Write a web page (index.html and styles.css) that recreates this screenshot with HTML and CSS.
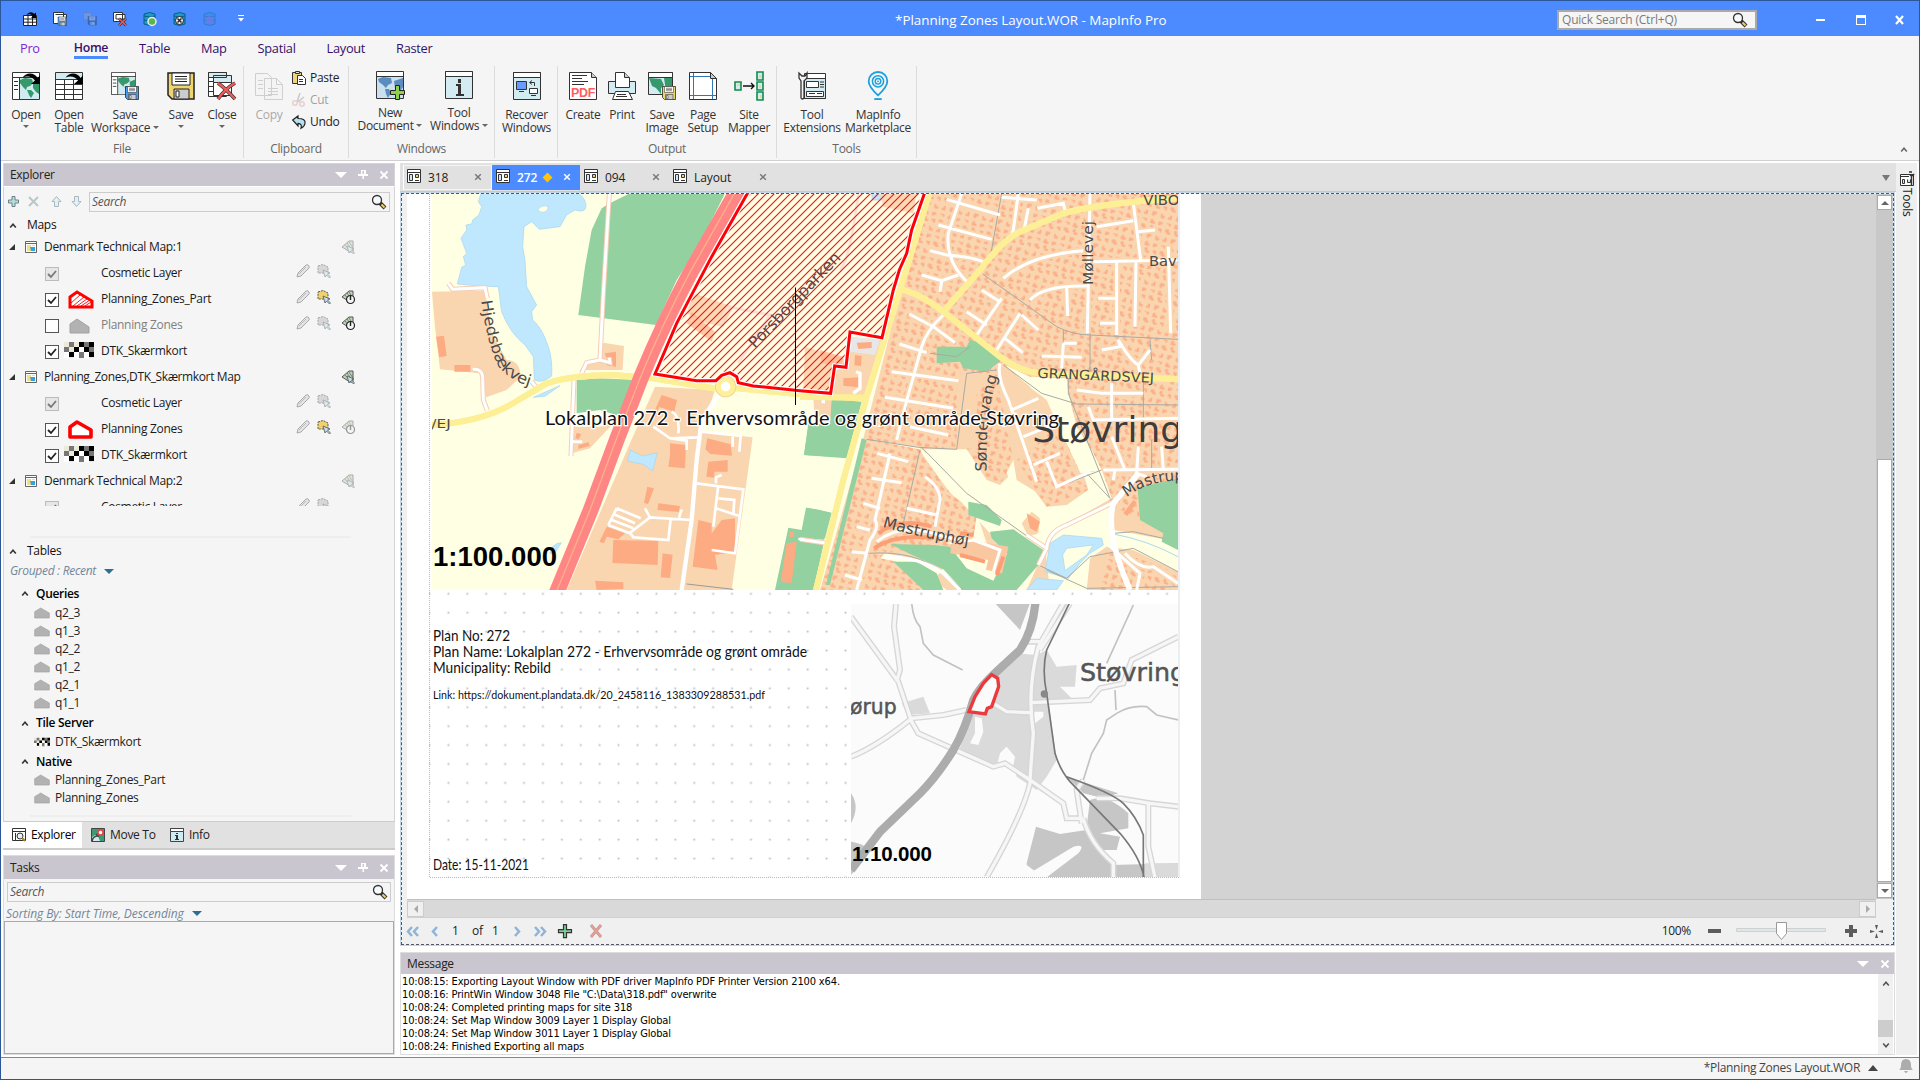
FILE: index.html
```html
<!DOCTYPE html>
<html lang="en">
<head>
<meta charset="utf-8">
<title>*Planning Zones Layout.WOR - MapInfo Pro</title>
<link rel="stylesheet" href="styles.css">
</head>
<body>
<svg class="defs" width="0" height="0">
  <defs>
    <symbol id="i-world" viewBox="0 0 28 28"><path fill="#fff" stroke="#333" d="M.5.5h27v27H.5z"/><path fill="#cfeaf1" d="M8 6h19v21H8z"/><path fill="#35996b" d="M8 8l5-2 7 1 1 4-3 3-3 1-1 3-3-3-3-4zM15 18l4 0 3 3-3 5-2-3zM21 12l6-3v13l-3-2-3-4z"/><path stroke="#333" d="M0 5.500h28M7.500 6v21M2 9.500h4M2 13.500h4M2 17.500h4"/></symbol>
    <symbol id="i-arrow" viewBox="0 0 28 28"><path fill="#000" d="M10.500 5.500C15-.5 23 1 25.500 6L28 3.500V12h-9l4-3.500C20 4 15 3.500 10.500 5.500z"/></symbol>
    <symbol id="i-table" viewBox="0 0 28 28"><path fill="#fff" stroke="#333" d="M.5.5h27v27H.5z"/><path fill="#d2ecf2" d="M1 1h26v6H1z"/><path stroke="#333" fill="none" d="M0 7.500h28M0 12.500h28M0 17.500h28M0 22.500h28M9.500 7v20M18.500 7v20"/></symbol>
    <symbol id="i-disk" viewBox="0 0 28 28"><path fill="currentColor" stroke="#222" stroke-width="1.500" d="M1 1h26v26H5l-4-4z"/><path fill="#fff" stroke="#222" d="M5 1h18v12H5z"/><path stroke="#222" d="M8 4.500h12M8 7h12M8 9.500h12"/><path fill="#ccc" stroke="#222" d="M7 17h15v10H7z"/><path fill="#fff" stroke="#222" d="M9 19h3v6H9z"/></symbol>
    <symbol id="i-mag" viewBox="0 0 16 16"><path d="M9 9l5 5" stroke="#333" stroke-width="4"/><path d="M10.500 10.500l3 3" stroke="#f0cf60" stroke-width="2"/><circle cx="6" cy="6" r="4.500" fill="#f7fafc" stroke="#333" stroke-width="1.300"/></symbol>
    <symbol id="i-x" viewBox="0 0 10 10"><path d="M1.500 1.500l7 7M8.500 1.500l-7 7" stroke="currentColor" stroke-width="1.800"/></symbol>
    <symbol id="i-pin" viewBox="0 0 10 10"><path fill="currentColor" d="M3 0h5v4h2v2H6v3H4.500V6H0V4h3z"/><path fill="#c9c6cf" d="M4.500 1H6v3H4.500z"/></symbol>
    <symbol id="i-up" viewBox="0 0 10 8"><path d="M1.500 6.500L5 2.500l3.500 4" fill="none" stroke="currentColor" stroke-width="2"/></symbol>
    <symbol id="i-map" viewBox="0 0 12 12"><path fill="#fff" stroke="#666" d="M.5.5h11v11H.5z"/><path stroke="#666" d="M0 2.500h12"/><path fill="#f5dd83" d="M2 4h4v6H2zM7 4h3v1H7z"/><path fill="#30a4dc" d="M5 6h5v4H6z"/></symbol>
    <symbol id="i-pen" viewBox="0 0 14 14"><path d="M1 13l1-4 8-8q2-1 3 1t-1 3l-7 7z" fill="#e4e4e4" stroke="#a9a9a9"/><path d="M3 10l7-7" stroke="#bbb"/></symbol>
    <symbol id="i-sel" viewBox="0 0 15 14"><path fill="currentColor" stroke="#555" stroke-dasharray="2 1" d="M2 2l5-1.500L12 3v6H2z"/><path fill="#bfe0ee" stroke="#555" stroke-width=".8" d="M7 6l7 3-2.500 1 3 3-1 1-3-3L9 13z"/></symbol>
    <symbol id="i-tag" viewBox="0 0 14 14"><path fill="#bcd6b6" stroke="#555" d="M12 1v11H9L1 7l7-6z"/><path stroke="#666" stroke-width=".8" d="M4 5l5 6M6 3l5 7M8 2l4 6"/></symbol>
    <symbol id="i-poly" viewBox="0 0 24 18"><path fill="#b2b2b2" stroke="#a2a2a2" d="M1 7l9-5.500L23 9v7.500H1z"/></symbol>
    <symbol id="i-check" viewBox="0 0 30 16"><path fill="#ece9d8" d="M0 0h30v16H0z"/><path fill="#777" d="M5 0h5v5H5zM0 5h5v5H0zM20 0h5v5h-5zM15 10h5v6h-5zM25 5h5v5h-5z"/><path fill="#000" d="M15 0h5v5h-5zM25 0h5v5h-5zM10 5h5v5h-5zM20 5h5v5h-5zM5 10h5v5H5zM25 10h5v5h-5z"/><path fill="#fff" d="M0 10h5v6H0zM10 10h5v6h-5zM20 10h5v6h-5zM15 5h5v5h-5z"/></symbol>
    <symbol id="i-layout" viewBox="0 0 14 14"><path fill="#fff" stroke="#333" d="M.5.5h13v13H.5z"/><path stroke="#333" d="M0 3.500h14"/><path fill="#cfeaf1" stroke="#333" d="M2.500 5.500h3v6h-3z"/><path fill="#f0d570" stroke="#333" d="M8.500 5.500h3v3h-3z"/><path stroke="#333" d="M8 11.500h4"/></symbol>
    <symbol id="i-db" viewBox="0 0 14 14"><path fill="#1d9bc8" stroke="#0b5c86" d="M1 2q6-3 11 0v10q-5 3-11 0z"/><path fill="none" stroke="#0b5c86" d="M1 4q6 2 11 0M1 8q6 2 11 0"/></symbol>
    <pattern id="dots" patternUnits="userSpaceOnUse" x="438.900" y="584.300" width="18.910" height="18.910"><path fill="#b4bec8" d="M8.600 8.600h1.800v1.800H8.600z"/></pattern>
    <pattern id="hatch" patternUnits="userSpaceOnUse" width="24" height="24"><path d="M-4 28L28-4M-4 4L4-4M20 28l8-8" stroke="#f41010" stroke-width="3.400"/></pattern>
    <pattern id="homes" patternUnits="userSpaceOnUse" width="74" height="68" patternTransform="rotate(14)"><path fill="#fcb089" d="M4 4h12v6h5v8H10v-5H4zM32 2h8v9h7v7H35v-6h-4zM57 6h11v12h-5v-5h-6zM8 29h7v13H3v-6h5zM28 28h14v8h-6v6h-8zM53 30h7v5h7v8H55v-7zM4 53h13v8h-6v-4H4zM30 52h7v6h6v7H28v-7zM53 54h13v7h-6v4h-7z"/></pattern>
    <clipPath id="mainclip"><path d="M432 194h746v396H432z"/></clipPath>
    <clipPath id="miniclip"><path d="M851 604h327v273H851z"/></clipPath>
    <clipPath id="resclip"><path d="M388 100H1134V960L1015 985 1020 1080 925 1030 840 940 775 800 740 720 700 690 610 615 590 650 640 900 600 975 560 950 500 870 370 868 450 1000 530 1060 520 1140 620 1170 580 1260 450 1160 250 1180 420 1290H60L200 840 300 400ZM860 650H1134V940H905L860 800ZM650 900L760 810 865 990 740 1040ZM920 1160L1134 1240V1290H900Z"/></clipPath>
    <g id="streets"><path d="M485 100L445 220Q435 300 500 365M440 118L600 165M415 195L575 238M390 272L440 285Q520 290 560 310M365 345L425 362 475 345M425 362L420 395M655 100L640 210 630 240M605 112L710 120M712 145L790 130 795 150M685 145L672 210M870 100L862 520M890 200L1000 182M1000 130L1022 300M1015 215L1065 210M610 355Q690 285 850 272M880 305L1134 300M950 305V525M1008 300L1005 500M1105 260L1112 520M690 420Q730 375 860 378M800 380L803 468M895 415H948M900 490H948M660 460L590 570M665 465L715 510M615 535L668 578M605 415L530 525M500 455L560 495M545 390L600 425M430 465Q380 510 365 560L318 730 290 840M328 462L400 500 465 548M298 552L380 578M275 635L475 662M255 712L460 745M330 800L445 825M270 880L225 1080Q240 1100 210 1140L170 1290M215 955L305 968M232 880L325 905M190 1030L240 1045M170 1100L210 1110M155 1175L200 1180M135 1245L185 1260M375 950Q420 980 420 1020L405 1100M320 1045L410 1065M230 1145Q300 1090 400 1120T520 1140L600 1170 580 1235M600 610Q590 650 625 720L710 965M635 750L715 715M670 830L770 790M700 915L780 880M740 905L770 980 870 935M905 570L960 560 955 540Q990 600 1015 615L1050 570M1015 615L1020 640M790 550L785 625M725 588L845 592M790 550L830 550M935 670V780M830 690L905 700 1030 700M865 740L880 780 1134 775M935 830L975 930M910 930L1134 928M1085 860L1090 930M1015 860L1010 940 1040 950M945 930L940 960M925 1155L1020 1240 1010 1290M975 1180Q1020 1230 1060 1220L1134 1270"/></g>
    <path id="p-hj" d="M244 422Q262 560 298 622 335 665 395 680"/>
    <path id="p-so" d="M560 935Q555 740 600 630"/>
    <path id="p-mh" d="M247 1100Q370 1135 510 1158"/>
    <path id="p-mv" d="M980 1012Q1050 955 1170 962"/>
  </defs>
</svg>

<div class="window">
  <header class="titlebar">
    <div class="quick">
      <svg viewBox="0 0 14 14"><path fill="#fff" stroke="#222" d="M.5 3.500h13v10H.5zM.5 7h13M.5 10.200h13M5 4v9M9.500 4v9"/><path fill="#000" d="M3.500 3C6-1 10 0 11 2l2-1.500V6H8l2-2C8 2 6 2 3.500 3z"/></svg>
      <svg viewBox="0 0 28 28"><path fill="#fff" stroke="#333" stroke-width="2" d="M1 1h20v22H1zM5 5h22v8"/><svg class="blue" x="9" y="9" width="19" height="19"><use href="#i-disk"/></svg></svg>
      <svg class="faded" viewBox="0 0 28 28"><path fill="#aaa" stroke="#777" stroke-width="2" d="M1 1h16v15H1z"/><svg x="9" y="8" width="19" height="19"><use href="#i-disk"/></svg></svg>
      <svg viewBox="0 0 28 28"><path fill="#fff" stroke="#333" stroke-width="2" d="M1 1h18v18H1zM6 5h18v9H6z"/><path d="M12 13l14 14M26 13L12 27" stroke="#333" stroke-width="5"/><path d="M12 13l14 14M26 13L12 27" stroke="#ef5a5a" stroke-width="3"/></svg>
      <svg viewBox="0 0 14 14"><use href="#i-db"/><circle cx="9" cy="9.500" r="4" fill="#59b74c" stroke="#eee" stroke-width="1.500"/></svg>
      <svg viewBox="0 0 14 14"><use href="#i-db"/><circle cx="6.500" cy="8.500" r="4" fill="#eee" stroke="#222"/><path d="M4.500 6.500l4 4M8.500 6.500l-4 4" stroke="#222" stroke-width="1.400"/></svg>
      <svg class="faded" viewBox="0 0 14 14"><use href="#i-db"/><circle cx="6.500" cy="8" r="3.500" fill="#a55db5"/></svg>
      <svg class="more" viewBox="0 0 6 7"><path fill="#fff" d="M0 0h6v1H0zM0 3h6L3 6.500z"/></svg>
    </div>
    <div class="apptitle">*Planning Zones Layout.WOR - MapInfo Pro</div>
    <div class="qsearch"><span>Quick Search (Ctrl+Q)</span><svg width="16" height="16"><use href="#i-mag"/></svg></div>
    <div class="winbtns">
      <svg width="10" height="12"><path fill="#fff" d="M0 5h9v2H0z"/></svg>
      <svg width="10" height="12"><path fill="#fff" d="M0 1h10v10H0z"/><path fill="#4c8bff" d="M1 4h8v6H1z"/></svg>
      <svg width="10" height="12"><path stroke="#fff" stroke-width="2.200" d="M1 2l7 8M8 2l-7 8"/></svg>
    </div>
  </header>

  <section class="ribbon">
    <nav class="rtabs"><span class="pro">Pro</span><span class="on">Home</span><span>Table</span><span>Map</span><span>Spatial</span><span>Layout</span><span>Raster</span></nav>
    <div class="groups">
      <div class="group g-file"><div class="btns">
        <div class="btn" style="width:40px"><svg viewBox="0 0 28 28"><use href="#i-world"/><use href="#i-arrow"/></svg><span>Open</span><i class="dd"></i></div>
        <div class="btn" style="width:46px"><svg viewBox="0 0 28 28"><use href="#i-table"/><use href="#i-arrow"/></svg><span>Open<br>Table</span></div>
        <div class="btn" style="width:66px"><svg viewBox="0 0 28 28"><svg width="25" height="23" preserveAspectRatio="none" viewBox="0 0 28 28"><use href="#i-world"/></svg><svg class="blue" x="14" y="14" width="14" height="14"><use href="#i-disk"/></svg></svg><span>Save<br>Workspace <i class="dd in"></i></span></div>
        <div class="btn" style="width:46px"><svg class="gold" viewBox="0 0 28 28"><use href="#i-disk"/></svg><span>Save</span><i class="dd"></i></div>
        <div class="btn" style="width:36px"><svg viewBox="0 0 28 28"><path fill="#fff" stroke="#333" d="M.5.5h18v24H.5zM.5 9.500h18M.5 14.500h18M.5 19.500h18"/><path fill="#d2ecf2" stroke="#333" d="M.5.5h18v5H.5zM5.500 3.500h18v7h-18z"/><path d="M5.500 10.500h18v13h-18z" fill="#fff" stroke="#333"/><path d="M10 11q8 6 17 16M27 11Q17 17 10 27" stroke="#333" stroke-width="3.500" fill="none"/><path d="M10 11q8 6 17 16M27 11Q17 17 10 27" stroke="#ef5a5a" stroke-width="2.200" fill="none"/></svg><span>Close</span><i class="dd"></i></div>
      </div><div class="gname">File</div></div>
      <div class="group g-clip"><div class="btns">
        <div class="btn off" style="width:42px"><svg viewBox="0 0 28 28"><path fill="#f4f4f4" stroke="#999" d="M.5 1.500h12l4 4v18H.5zM9.500 6.500h12l6 6v15h-18zM21.500 6.500v6h6M3 8.500h5M3 12.500h5M3 16.500h5M13 16.500h10M13 19.500h10M13 22.500h10"/></svg><span>Copy</span></div>
        <div class="small">
          <div><svg viewBox="0 0 14 14"><path fill="#efd57a" stroke="#333" d="M.5 1.500h9v11h-9z"/><path fill="#ddd" stroke="#333" d="M3.500.5h4v2h-4z"/><path fill="#fff" stroke="#333" d="M5.500 4.500h5l3 3v6h-8zM7 8.500h4M7 10.500h4"/></svg>Paste</div>
          <div class="off"><svg viewBox="0 0 14 14"><path d="M5 9L8 0M6 9l6-5" stroke="#888" stroke-width="1.500"/><circle cx="3" cy="10" r="2.200" fill="none" stroke="#d99" stroke-width="1.600"/><circle cx="10" cy="11" r="2.200" fill="none" stroke="#d99" stroke-width="1.600"/></svg>Cut</div>
          <div><svg viewBox="0 0 14 14"><path fill="#b9e0ee" stroke="#222" stroke-width="1.200" d="M.7 5L6 1v2.500q8 0 7 5-.5 3-4 4.800 1.500-4.500-3-5V11z"/></svg>Undo</div>
        </div>
      </div><div class="gname">Clipboard</div></div>
      <div class="group g-win"><div class="btns lift">
        <div class="btn" style="width:68px"><svg viewBox="0 0 28 28"><path fill="#fff" stroke="#333" d="M.5.5h27v27H.5z"/><path fill="#cbe0ee" d="M1 6h26v21H1z"/><path fill="#5a8cc0" d="M2 8l5-2 8 1 1 5-4 2-2 3-3-3-4-3zM9 18h4l2 4-3 5-2-4zM18 10l9-3v9l-4 6-4-5z"/><path stroke="#333" d="M0 5.500h28"/><path fill="#8ed052" stroke="#222" d="M19.500 14.500h4v5h5v4h-5v5h-4v-5h-5v-4h5z"/></svg><span>New<br>Document <i class="dd in"></i></span></div>
        <div class="btn" style="width:70px"><svg viewBox="0 0 28 28"><path fill="#d2ecf2" stroke="#333" d="M.5.5h27v27H.5z"/><path fill="#fff" stroke="#333" d="M.5.5h27v5H.5z"/><path fill="#333" d="M13 8h3v4h-3zM11 13h5v10h3v2h-8v-2h2v-8h-2z"/></svg><span>Tool<br>Windows <i class="dd in"></i></span></div>
      </div><div class="gname">Windows</div></div>
      <div class="group g-rec"><div class="btns">
        <div class="btn" style="width:62px"><svg viewBox="0 0 28 28"><path fill="#d2ecf2" stroke="#333" d="M.5.5h27v27H.5z"/><path fill="#fff" stroke="#333" d="M.5.5h27v5H.5z"/><path fill="#669bff" stroke="#333" d="M3.500 9.500h10v8h-10z"/><path fill="#fff" stroke="#333" d="M16.500 16.500h8v5h-8z"/><path fill="none" stroke="#333" d="M6 19.500h5M18 23.500h5M21.500 14v-3.500H17m2-2l-2.500 2 2.500 2"/></svg><span>Recover<br>Windows</span></div>
      </div></div>
      <div class="group g-out"><div class="btns">
        <div class="btn" style="width:40px"><svg viewBox="0 0 28 28"><path fill="#fff" stroke="#333" d="M.5.500h22l5 5v22H.5z"/><path fill="#ccc" stroke="#333" d="M22.500.5v5h5"/><path stroke="#333" d="M3 3.500h15M3 6.500h10M3 9.500h16M3 12.500h12"/><text x="14" y="25" text-anchor="middle" font-family="Liberation Sans" font-weight="bold" font-size="12.500" textLength="24" lengthAdjust="spacingAndGlyphs" fill="#ff5e5e">PDF</text></svg><span>Create</span></div>
        <div class="btn" style="width:38px"><svg viewBox="0 0 28 28"><path fill="#d2ecf2" stroke="#333" d="M.5 9.500h27v12H.5z"/><path fill="#fff" stroke="#333" d="M7.500.5h9l5 5v10h-14zM7.500 19.500h13l4 8h-20zM9 22.500h9M8 24.500h11"/><path fill="#ccc" stroke="#333" d="M16.500.5v5h5"/></svg><span>Print</span></div>
        <div class="btn" style="width:42px"><svg viewBox="0 0 28 28"><path fill="#d2ecf2" stroke="#333" d="M.5.5h24v22H.5z"/><path fill="#35996b" d="M1 6l12 1 3 6-3 3v6L8 16l-4-2zM16 6h8v10l-6 3z"/><path fill="#fff" stroke="#333" d="M.5.5h24v5H.5z"/><svg class="gold" x="14" y="14" width="14" height="14"><use href="#i-disk"/></svg></svg><span>Save<br>Image</span></div>
        <div class="btn" style="width:40px"><svg viewBox="0 0 28 28"><path fill="#fff" stroke="#333" d="M.5.500h21l6 6v21H.5z"/><path stroke="#2f78b5" d="M4.500 1v26M23.500 6v21M1 4.500h22M1 23.500h26"/><path fill="#ccc" stroke="#333" d="M21.500.5v6h6z"/></svg><span>Page<br>Setup</span></div>
        <div class="btn" style="width:52px"><svg class="wide" viewBox="0 0 30 30"><path fill="#d2ecf2" stroke="#138a50" stroke-width="1.600" d="M1 11h6v8H1zM23 1h6v8h-6zM23 11h6v8h-6zM23 21h6v8h-6z"/><path fill="#eedc75" d="M3 13h3v2H3zM25 4h3v3h-3zM25 14h2v3h-2zM26 24h2v3h-2z"/><path fill="none" stroke="#111" stroke-width="1.400" d="M9 15h11m-3-3l3 3-3 3"/></svg><span>Site<br>Mapper</span></div>
      </div><div class="gname">Output</div></div>
      <div class="group g-tools"><div class="btns">
        <div class="btn" style="width:64px"><svg viewBox="0 0 28 28"><path fill="#fff" stroke="#333" d="M6.500 1.500h21v25h-21z"/><path fill="#d2ecf2" stroke="#333" d="M6.500 6.500h21v20h-21z"/><path fill="#fff" stroke="#333" d="M8.500 9.500h12v6h-12zM8.500 19.500h17v5h-17zM22 10h4M22 12.500h4M22 15h4M11 21.500h6M19 21.500h5"/><path fill="#f4f4f4" stroke="#333" stroke-width="1.300" d="M1 1v5l2 3v17q1 2 3 0V9l3-3V1L7 4H4z"/></svg><span>Tool<br>Extensions</span></div>
        <div class="btn" style="width:68px"><svg viewBox="0 0 28 30"><path fill="none" stroke="#1ba0dc" stroke-width="1.900" d="M14 25Q4 16 4 10a10 10 0 0 1 20 0q0 6-10 15z"/><circle cx="14" cy="10" r="6" fill="none" stroke="#1ba0dc" stroke-width="1.600"/><circle cx="14" cy="10" r="3" fill="none" stroke="#1ba0dc" stroke-width="1.500"/><circle cx="14" cy="10" r="1" fill="#1ba0dc"/><path fill="#1ba0dc" d="M10 28h8v2h-8z"/></svg><span>MapInfo<br>Marketplace</span></div>
      </div><div class="gname">Tools</div></div>
      <svg class="collapse" width="8" height="7"><use href="#i-up"/></svg>
    </div>
  </section>

  <main class="main">
    <aside class="left">
      <section class="explorer">
        <div class="phead"><span>Explorer</span><svg width="12" height="6"><path fill="#fff" d="M0 0h12L6 6z"/></svg><svg width="10" height="10"><use href="#i-pin"/></svg><svg width="10" height="10"><use href="#i-x"/></svg></div>
        <div class="ebody">
          <div class="etools">
            <svg viewBox="0 0 11 11"><path fill="#b9dcd9" stroke="#6c8289" d="M4 .5h3V4h3.500v3H7v3.500H4V7H.5V4H4z"/></svg>
            <svg viewBox="0 0 11 11"><path stroke="#b9c6ca" stroke-width="2" d="M1 1l9 9M10 1l-9 9"/></svg>
            <svg viewBox="0 0 11 11"><path fill="#e2eff3" stroke="#a8b9c0" d="M5.500.5l4.500 5H7.500v5h-4v-5H1z"/></svg>
            <svg viewBox="0 0 11 11"><path fill="#e2eff3" stroke="#a8b9c0" d="M5.500 10.500l4.500-5H7.500v-5h-4v5H1z"/></svg>
            <div class="sbox"><em>Search</em><svg width="16" height="16"><use href="#i-mag"/></svg></div>
          </div>
          <div class="sec"><svg width="8" height="7"><use href="#i-up"/></svg>Maps</div>
          <div class="tree">
            <div class="root"><b class="tri"></b><svg class="mi"><use href="#i-map"/></svg><span>Denmark Technical Map:1</span><svg class="tg dim" viewBox="0 0 14 14"><use href="#i-tag"/><path fill="#bfe0ee" stroke="#555" stroke-width=".8" d="M6 6l7 3-2.500 1 3 3-1 1-3-3L8 13z"/></svg></div>
            <div class="lay"><i class="cb gray"><svg viewBox="0 0 12 12"><path d="M2 6l3 3 5-6"/></svg></i><span class="sw"></span><span>Cosmetic Layer</span><svg class="pn"><use href="#i-pen"/></svg><svg class="sl no"><use href="#i-sel"/></svg></div>
            <div class="lay"><i class="cb"><svg viewBox="0 0 12 12"><path d="M2 6l3 3 5-6"/></svg></i><svg class="sw" viewBox="0 0 30 20"><path fill="#fff" stroke="red" stroke-width="3" d="M6 8l7-5 15 9v6H6z"/><path stroke="red" stroke-width=".9" d="M7 14l9-8M9 17L20 8M13 17l10-7M17 17l9-6M21 17l6-4"/></svg><span>Planning_Zones_Part</span><svg class="pn"><use href="#i-pen"/></svg><svg class="sl"><use href="#i-sel"/></svg><svg class="tg" viewBox="0 0 14 14"><use href="#i-tag"/><circle cx="9.500" cy="9.500" r="4" fill="#f4f4f4" stroke="#222" stroke-width="1.200"/><path stroke="#222" stroke-width="1.400" d="M9.500 6v4"/></svg></div>
            <div class="lay hid"><i class="cb"></i><svg class="sw" viewBox="0 0 30 20"><path fill="#b2b2b2" stroke="#a2a2a2" d="M6 9l7-5 12 8v6H6z"/></svg><span>Planning Zones</span><svg class="pn"><use href="#i-pen"/></svg><svg class="sl no"><use href="#i-sel"/></svg><svg class="tg" viewBox="0 0 14 14"><use href="#i-tag"/><circle cx="9.500" cy="9.500" r="4" fill="#f4f4f4" stroke="#222" stroke-width="1.200"/><path stroke="#222" stroke-width="1.400" d="M9.500 6v4"/></svg></div>
            <div class="lay"><i class="cb"><svg viewBox="0 0 12 12"><path d="M2 6l3 3 5-6"/></svg></i><svg class="sw"><use href="#i-check"/></svg><span>DTK_Skærmkort</span></div>
            <div class="root"><b class="tri"></b><svg class="mi"><use href="#i-map"/></svg><span class="tight">Planning_Zones,DTK_Skærmkort Map</span><svg class="tg" viewBox="0 0 14 14"><use href="#i-tag"/><path fill="#bfe0ee" stroke="#555" stroke-width=".8" d="M6 6l7 3-2.500 1 3 3-1 1-3-3L8 13z"/></svg></div>
            <div class="lay"><i class="cb gray"><svg viewBox="0 0 12 12"><path d="M2 6l3 3 5-6"/></svg></i><span class="sw"></span><span>Cosmetic Layer</span><svg class="pn"><use href="#i-pen"/></svg><svg class="sl no"><use href="#i-sel"/></svg></div>
            <div class="lay"><i class="cb"><svg viewBox="0 0 12 12"><path d="M2 6l3 3 5-6"/></svg></i><svg class="sw" viewBox="0 0 30 20"><path fill="#fff" stroke="red" stroke-width="3.600" stroke-linejoin="round" d="M6 8l7-5 14 8v7H6z"/></svg><span>Planning Zones</span><svg class="pn"><use href="#i-pen"/></svg><svg class="sl"><use href="#i-sel"/></svg><svg class="tg dim" viewBox="0 0 14 14"><use href="#i-tag"/><circle cx="9.500" cy="9.500" r="4" fill="#f4f4f4" stroke="#222" stroke-width="1.200"/><path stroke="#222" stroke-width="1.400" d="M9.500 6v4"/></svg></div>
            <div class="lay"><i class="cb"><svg viewBox="0 0 12 12"><path d="M2 6l3 3 5-6"/></svg></i><svg class="sw"><use href="#i-check"/></svg><span>DTK_Skærmkort</span></div>
            <div class="root"><b class="tri"></b><svg class="mi"><use href="#i-map"/></svg><span>Denmark Technical Map:2</span><svg class="tg dim" viewBox="0 0 14 14"><use href="#i-tag"/><path fill="#bfe0ee" stroke="#555" stroke-width=".8" d="M6 6l7 3-2.500 1 3 3-1 1-3-3L8 13z"/></svg></div>
            <div class="lay"><i class="cb gray"><svg viewBox="0 0 12 12"><path d="M2 6l3 3 5-6"/></svg></i><span class="sw"></span><span>Cosmetic Layer</span><svg class="pn"><use href="#i-pen"/></svg><svg class="sl no"><use href="#i-sel"/></svg></div>
          </div>
          <hr>
          <div class="sec tsec"><svg width="8" height="7"><use href="#i-up"/></svg>Tables</div>
          <div class="grouped"><em>Grouped : Recent</em><i class="bluetri"></i></div>
          <div class="th"><svg width="8" height="7"><use href="#i-up"/></svg>Queries</div>
          <div class="tr"><svg><use href="#i-poly"/></svg>q2_3</div>
          <div class="tr"><svg><use href="#i-poly"/></svg>q1_3</div>
          <div class="tr"><svg><use href="#i-poly"/></svg>q2_2</div>
          <div class="tr"><svg><use href="#i-poly"/></svg>q1_2</div>
          <div class="tr"><svg><use href="#i-poly"/></svg>q2_1</div>
          <div class="tr"><svg><use href="#i-poly"/></svg>q1_1</div>
          <div class="th tile"><svg width="8" height="7"><use href="#i-up"/></svg>Tile Server</div>
          <div class="tr"><svg><use href="#i-check"/></svg>DTK_Skærmkort</div>
          <div class="th"><svg width="8" height="7"><use href="#i-up"/></svg>Native</div>
          <div class="tr"><svg><use href="#i-poly"/></svg>Planning_Zones_Part</div>
          <div class="tr"><svg><use href="#i-poly"/></svg>Planning_Zones</div>
          <hr class="last">
        </div>
        <div class="ptabs">
          <div class="on"><svg viewBox="0 0 14 14"><path fill="#fff" stroke="#333" d="M.5.5h13v12H.5zM0 3.500h14M3.500 5v7"/><circle cx="8" cy="8" r="3" fill="#e4f1f5" stroke="#333"/><path d="M10 10l3 3" stroke="#a58320" stroke-width="2"/></svg>Explorer</div>
          <div class="mv"><svg viewBox="0 0 14 14"><path fill="#3a9c72" stroke="#444" d="M.5.5h13v13H.5z"/><path fill="#cfeaf1" d="M1 9l5-3 3 7H2z"/><circle cx="9.500" cy="4.500" r="2.500" fill="#fff" stroke="#e34949" stroke-width="1.500"/><path d="M1 13q1-5 6-5l-2-2" stroke="#444" fill="none" stroke-width="1.500"/></svg>Move To</div>
          <div class="inf"><svg viewBox="0 0 14 14"><path fill="#cfeaf1" stroke="#444" d="M.5.5h13v13H.5z"/><path fill="#fff" stroke="#444" d="M.5.5h13v3H.5z"/><path fill="#333" d="M6 5h2v1H6zM5 7h3v4h1v1H5v-1h1V8H5z"/></svg>Info</div>
        </div>
      </section>
      <section class="tasks">
        <div class="phead"><span>Tasks</span><svg width="12" height="6"><path fill="#fff" d="M0 0h12L6 6z"/></svg><svg width="10" height="10"><use href="#i-pin"/></svg><svg width="10" height="10"><use href="#i-x"/></svg></div>
        <div class="sbox"><em>Search</em><svg width="16" height="16"><use href="#i-mag"/></svg></div>
        <div class="sorting"><em>Sorting By: Start Time, Descending</em><i class="bluetri"></i></div>
        <div class="tlist"></div>
      </section>
    </aside>

    <section class="center">
      <div class="dtabs">
        <div class="dtab first"><svg class="ic"><use href="#i-layout"/></svg><span>318</span><svg class="cx"><use href="#i-x"/></svg></div>
        <div class="dtab on"><svg class="ic"><use href="#i-layout"/></svg><span>272</span><i class="dia"></i><svg class="cx"><use href="#i-x"/></svg></div>
        <div class="dtab"><svg class="ic"><use href="#i-layout"/></svg><span>094</span><svg class="cx"><use href="#i-x"/></svg></div>
        <div class="dtab lay4"><svg class="ic"><use href="#i-layout"/></svg><span>Layout</span><svg class="cx"><use href="#i-x"/></svg></div>
        <i class="tabdd"></i>
      </div>
      <div class="doc">
        <div class="docrow">
          <svg class="canvas" viewBox="407 194 1469 705" width="1469" height="705">
            <path fill="#d3d3d3" d="M407 194h1469v705H407z"/>
            <path fill="#fff" d="M407 194h794v705H407z"/>
            <path fill="url(#dots)" d="M429 584h750v293H429z"/>
            <path fill="none" stroke="#b3bdc6" stroke-dasharray="1 1" d="M429.500 194v683.500h749.500V194"/>
            <g clip-path="url(#mainclip)">
              <path fill="#ffffe4" d="M432 194h746v396H432z"/>
              <g transform="translate(400 160) scale(.33333)">
                <path class="lake" d="M243 100L235 125 245 140 237 165 218 180 215 192 198 195 200 210 183 235 200 280 190 290 197 315 185 322 172 372 235 378 295 380 305 455Q330 520 375 555L400 590 403 660Q425 672 455 648 458 600 445 560 425 500 398 480L395 455 410 435 380 380 375 300 368 260 372 200 395 185 418 208 480 200 500 165 525 150Q555 160 558 140 558 115 535 100Z"/>
                <path fill="#ffffe4" stroke="#a3d5ee" stroke-width="2" d="M413 150q12-18 32-10-2 20-24 16z"/>
                <path class="lake" d="M400 712l80-35-45 32zM450 1180q5-30 34-32l-20 32z"/>
                <path class="wood" d="M632 128L690 100H975L905 240 830 360 768 495 535 465 555 320 575 210 605 145ZM530 660L600 655 710 660 665 770 600 750 530 760ZM1165 1103L1205 1110 1218 1043 1260 1050 1290 1058 1240 1290H1125ZM1225 800L1300 790V890L1212 885Z"/>
                <path class="town" d="M96 395L255 392 275 520 320 600Q360 600 362 650L320 690 258 712 240 640 120 628 105 500ZM610 548L672 558 668 630H540L570 600H600ZM520 800L600 800 640 790 570 865 515 880ZM765 680L945 690 935 720 900 790 905 815 1058 832 995 1290H500L690 850ZM1240 715L1300 718 1290 790 1245 790Z"/>
                <path class="bld" d="M108 530l24-3 8 61-22 4zM163 615h48v20h-48zM615 580l33-5v45l-28-4v-10h12v-14h-14zM785 705l46 15-8 35-46-14-8 30-10-8zM530 818l14 5-8 15-10-4zM535 855l30-8 5 10-35 10zM810 850l48 5-3 70-50-5 5-35zM922 835l70 18 4 34-65-5-15-14zM925 905l58-5v35h-40v18l-24-3zM742 980l20 5-18 48-12-5zM775 1030l65 8-4 18-64-6zM895 1080l40 10v30l30-40 40-5v100l-60 10 8 45-75-10zM640 1140l135 3-2 72-136-6zM788 1180l30 4-8 70-28-2zM585 1262l85 5v20l-80 3zM620 1100l55 20-20 18-35-8-8 20-14-5zM1160 1150l30-5-15 125-33-5zM1168 1115l14 2-2 15h-12z"/>
                <path class="lake" d="M692 870l35 18 45-10-14 55-28-20-48-10z"/>
                <path d="M860 1272l140 16" stroke="#999" stroke-width="3"/>
                <g class="casing"><path id="aw" d="M628 100L610 400 600 600 560 608 545 640M522 660L513 888M513 845h34M218 628Q248 625 248 655L250 720 262 752M145 370L158 388 255 383 262 415M600 600l30 8-2-15M395 665l15 18"/></g>
                <use href="#aw" class="road"/>
                <g class="road2"><path d="M960 700L905 780 890 900 875 1080 845 1290" stroke-width="13"/><path d="M905 815L1022 828 1018 875M998 830V860M890 970L1030 988 1005 1180 935 1170M955 975L940 1100M955 1015L1003 1020 1000 1060M948 1045L1018 1068M948 970V952L965 945M875 1080L750 1072 690 1118 700 1132 805 1140 812 1078M750 1072L735 1045M650 1045L722 1075M640 1062L705 1090M630 1078L700 1105M625 1095L690 1120M650 1045L625 1095M760 800L810 835 860 842V870M810 835L895 832M835 820Q840 765 815 755M845 1048l-8 25M1195 1137L1290 1145"/></g>
                <path id="yw" class="ycase" d="M96 795Q240 785 330 735L440 670Q520 645 640 645L760 655 940 685 1010 685 1260 708 1400 715"/>
                <use href="#yw" class="yroad"/>
                <circle cx="977" cy="680" r="22" fill="#fff" stroke="#f0d49a" stroke-width="20"/><circle cx="977" cy="680" r="22" fill="#fff" stroke="#fdf096" stroke-width="15"/>
                <path fill="none" stroke="#ff8684" stroke-width="47" d="M1013 90L870 340Q790 490 724 650L650 840 572 1050 465 1310"/>
                <path fill="none" stroke="#f9b28a" stroke-width="4" d="M1009 90L868 340Q788 490 722 650L648 840 570 1050 463 1310"/>
              </g>
              <g transform="translate(800 160) scale(.33333)">
                <path class="town" d="M385 100H1134V1290H60L190 835 300 400Z"/>
                <path class="town" d="M150 530L245 540 200 710H20L95 700 108 620 140 620ZM50 715l45 3-10 75-40-10z"/>
                <path fill="#e7e7ea" d="M155 532l85 8-15 45-75-10z"/>
                <path class="bld" d="M170 548l45-2v18l-40 3zM165 585l20 3-2 30-20-2zM130 655l45-3v30l-45-5z"/>
                <g clip-path="url(#resclip)">
                  <path fill="url(#homes)" d="M40 100H1134V1290H40Z"/>
                  <use href="#streets" class="rgap"/>
                </g>
                <path fill="#ffffe4" d="M200 838L360 862 365 880 450 1000 530 1060 560 1150 500 1130 380 1290H750L735 1165 640 1105 500 1000 450 935 370 868H500L560 960 600 975 625 950 590 870 640 900 650 960 715 1000 740 1040 800 1035 865 990 850 940 905 930 935 1015 770 1110 735 1165H640L600 1180 440 1150 500 1130 520 1060 460 1000 370 870ZM615 615L690 650 800 655 805 700 830 800 875 870 905 930 840 940 775 800 740 720 700 690ZM940 1110L1134 1145V1235L1000 1170 920 1160 870 1195 860 1290H680L735 1165 770 1110 935 1030ZM255 1180L330 1195 430 1235 500 1290H440L340 1215 240 1195Z"/>
                <path fill="#ffffe4" d="M365 878L500 870 640 1105 735 1165 640 1165 570 1120 460 1000Z"/>
                <path class="town" d="M470 640H590L640 900 600 975 560 950 520 865 470 868ZM370 900L470 1020 455 1070 530 1070 520 1135 400 1130 330 1100ZM665 1090l30-35 25 20-5 45-30 10zM650 900L760 820 800 850 865 990 740 1040 690 975Z"/>
                <g clip-path="url(#resclip)"><path fill="url(#homes)" d="M530 700L590 640 640 900 600 975 560 950 530 865ZM370 900L470 1020 455 1070 530 1070 520 1135 400 1130 330 1100ZM650 900L760 820 800 850 865 990 740 1040 690 975Z"/></g>
                <path class="bld" d="M680 1060l40 25-10 30-20-10zM970 1060l30-40 10 8-28 40z"/>
                <path class="wood" d="M95 718L185 725 140 895 12 885 25 790 90 795ZM20 1043L95 1058 75 1135 5 1125ZM185 835L200 840 90 1275H78ZM410 560L500 560 510 540 550 550 605 600 560 635 490 625 480 605 410 610ZM1013 985L1134 955V1170L1085 1145 1090 1120 1020 1080ZM505 1025L560 1035 605 1080 600 1098 505 1065ZM0 1140L70 1155 40 1290H0ZM270 1152L400 1155 450 1160 500 1225 580 1262 622 1180 575 1135 570 1115 640 1108 730 1170 715 1215 650 1290H490L430 1228 330 1182ZM280 1205L350 1205 410 1240 430 1290H370Z"/>
                <path fill="none" stroke="#f9c7a0" stroke-width="50" d="M455 1155L595 1180 582 1235"/>
                <path fill="none" stroke="#fd9f75" stroke-width="12" d="M222 1165Q290 1120 400 1135M235 1120Q300 1070 395 1100M480 1185L555 1205M610 1190L590 1245M480 1120L520 1125"/>
                <path class="lake" d="M750 1150L790 1125 905 1135 910 1155 870 1180 840 1210 805 1255 735 1235ZM680 1290L710 1255 790 1262 770 1290ZM215 100h40l-10 20h-28z"/>
                <path fill="#ffffe4" stroke="#a3d5ee" stroke-width="2" d="M788 1185L800 1165 880 1155 860 1185 825 1210 795 1232Z"/>
                <path fill="none" stroke="#a9d9f5" stroke-width="3" d="M940 1122Q1040 1140 1134 1190"/>
                <g fill="none" stroke="#aaa9a3" stroke-width="3"><path d="M605 100L573 280M548 342L770 500Q820 525 870 525L1134 538M200 838L355 862 470 868 500 640 590 630M365 862L500 1000 740 1170M360 870L310 1090M205 1180Q350 1170 430 1240L490 1290M610 615L725 700 830 732 1134 735M805 655V700L930 1015M870 520V650M790 510V570M715 1215L800 1255 870 1190 1000 1165 1134 1235M740 1230L860 1285 1134 1280M800 970L905 930M860 940L930 1015M390 580L470 590 510 560M290 830L320 740M1050 540L1055 600M1030 665V840M1055 840V930M940 1120L1000 1115 1090 1135"/></g>
                <use href="#streets" class="road"/>
                <g class="casing"><path id="bw" d="M740 1165Q745 1115 800 1095L945 1025M680 1125L740 1165 715 1215M0 1138L80 1150"/></g>
                <use href="#bw" class="road"/>
                <path fill="none" stroke="#fff" stroke-width="17" d="M1015 940L940 1030Q915 1120 990 1290"/>
                <path fill="none" stroke="#fff" stroke-width="10" d="M250 1190Q360 1190 430 1240L480 1290M160 700l20-15v-45l-12-5M70 710v20"/>
                <path id="by" class="ycase" d="M388 100L300 390 200 710 130 960 48 1290M430 455L540 330Q600 250 650 220L790 160Q900 130 1134 115M300 388Q360 400 430 455L600 590Q650 630 720 640L1134 658M0 710L195 713"/>
                <use href="#by" class="yroad"/>
              </g>
              <g transform="translate(400 160) scale(.33333)">
                <g opacity=".9"><path class="town" d="M880 400L1000 440 970 500 920 490 860 460zM1215 560L1340 600 1300 700 1210 690zM1440 100h110l-10 60-90-20z"/><path class="bld" d="M875 455L945 515 935 545 860 490zM1260 570l70 20-5 30-60-10z" opacity=".7"/></g>
                <path fill="none" stroke="#fbe0d8" stroke-width="8" d="M960 490L985 440 1110 465 1015 610M1375 100Q1350 300 1320 330"/>
                <g class="mlabel"><text transform="translate(1066 568) rotate(-46.500)" font-size="48" textLength="376" lengthAdjust="spacingAndGlyphs">Porsborgparken</text></g>
                <path id="zone" fill="url(#hatch)" stroke="#fff" stroke-width="16" d="M1048 90L935 290 830 490 765 642 890 662H948L965 646 990 638 1010 650 1015 668 1060 678 1200 692 1292 700 1304 618 1338 622 1350 516 1446 533 1480 390 1498 330 1520 280 1535 210 1577 90Z"/>
                <path fill="none" stroke="#ff0008" stroke-width="9" d="M1048 90L935 290 830 490 765 642 890 662H948L965 646 990 638 1010 650 1015 668 1060 678 1200 692 1292 700 1304 618 1338 622 1350 516 1446 533 1480 390 1498 330 1520 280 1535 210 1577 90Z"/>
                <g class="mlabel">
                  <text font-size="46"><textPath href="#p-hj" textLength="316" lengthAdjust="spacingAndGlyphs">Hjedsbækvej</textPath></text>
                  <text x="94" y="805" font-size="38" textLength="58" lengthAdjust="spacingAndGlyphs">/EJ</text>
                </g>
              </g>
              <g transform="translate(800 160) scale(.33333)" class="mlabel">
                <text transform="translate(878 375) rotate(-90)" font-size="44" textLength="192" lengthAdjust="spacingAndGlyphs">Møllevej</text>
                <text x="1030" y="134" font-size="40" textLength="108" lengthAdjust="spacingAndGlyphs">VIBO</text>
                <text x="1047" y="317" font-size="44">Bavn</text>
                <text transform="translate(712 653) rotate(2.500)" font-size="41" textLength="350" lengthAdjust="spacingAndGlyphs">GRANGÅRDSVEJ</text>
                <text font-size="46"><textPath href="#p-so" textLength="290" lengthAdjust="spacingAndGlyphs">Søndervang</textPath></text>
                <text font-size="46"><textPath href="#p-mh" textLength="264" lengthAdjust="spacingAndGlyphs">Mastruphøj</textPath></text>
                <text font-size="45"><textPath href="#p-mv">Mastrupv</textPath></text>
                <text x="697" y="845" font-size="108" class="city">Støvring</text>
              </g>
              <path stroke="#000" d="M795.500 287.500V405"/>
              <text x="545" y="425" class="lato halo" font-size="20" textLength="514">Lokalplan 272 - Erhvervsområde og grønt område Støvring</text>
              <text x="433" y="566" class="scale" font-size="27.500" textLength="124">1:100.000</text>
            </g>
            <g class="lato">
              <text x="433" y="641" font-size="15" textLength="77" lengthAdjust="spacingAndGlyphs">Plan No: 272</text>
              <text x="433" y="657" font-size="15" textLength="374" lengthAdjust="spacingAndGlyphs">Plan Name: Lokalplan 272 - Erhvervsområde og grønt område</text>
              <text x="433" y="673" font-size="15" textLength="118" lengthAdjust="spacingAndGlyphs">Municipality: Rebild</text>
              <text x="433" y="699" font-size="11" textLength="332" lengthAdjust="spacingAndGlyphs">Link: https://dokument.plandata.dk/20_2458116_1383309288531.pdf</text>
              <text x="433" y="870" font-size="15" textLength="96" lengthAdjust="spacingAndGlyphs">Date: 15-11-2021</text>
            </g>
            <g clip-path="url(#miniclip)">
              <path fill="#fbfbfb" d="M851 604h327v273H851z"/>
              <g transform="translate(830 580) scale(.33333)" fill="none">
                <path fill="#c6c6c6" d="M495 70H600L570 150ZM63 640q28 40 0 90zM590 850L618 740 690 762 770 750 800 810 845 855 1045 850V892H640L590 855ZM780 660Q830 640 895 700L895 745 810 760 870 770 860 810 800 810 770 740ZM710 590L865 640 820 655 760 640ZM63 785q60 10 50 40l-50 60z"/>
                <path fill="#dadada" d="M560 220L620 225 650 210 680 260 740 255 735 320 690 320 725 355 655 360 680 540 650 590 620 630 560 590 530 500 510 520 500 560 385 515 430 400 460 400 510 250ZM215 370L280 350 300 400 235 405ZM945 850h100v42H945z"/>
                <path fill="#fbfbfb" d="M435 410l20 5 5 40-15 40-25-5 15-30zM515 515l15-15 25 30-5 25-35-15zM610 395h30v15l-25 20zM590 885L730 800Q770 790 745 820L650 892z"/>
                <g stroke="#d6d6d6" stroke-width="18"><path id="mw" d="M63 110L205 305 245 425 265 460 490 560 525 550 600 600 700 670 710 715 760 715M198 70L192 140 210 270 200 305M63 530Q140 500 245 415L340 405 410 390M490 370L530 395 600 398M700 70L625 200Q590 330 610 460 600 590 600 610 580 700 470 892M590 185L635 185M603 368L780 360 810 325 880 310 905 240 1045 170M720 70L630 210M760 715Q780 790 850 850V892M760 600L740 630 755 730M800 655L870 655 960 670 1045 680M955 670V800L975 892"/></g>
                <use href="#mw" stroke="#f6f6f6" stroke-width="10"/>
                <path stroke="#c2c2c2" stroke-width="5" d="M245 70Q250 120 270 140L280 190 310 225 398 270M910 75L830 250M855 330L858 390M760 600L785 520 820 460 830 420 860 400Q900 375 950 380L980 405 1045 420"/>
                <path stroke="#acacac" stroke-width="25" d="M617 60Q610 150 570 210L500 275Q450 320 430 360 405 450 370 510 320 590 270 640L150 755 63 870"/>
                <path stroke="#777" stroke-width="5" d="M718 70L650 210Q635 270 650 340L675 520Q690 570 720 605L870 760Q930 830 942 892M710 590Q850 640 880 670 920 710 940 765V892"/>
                <circle cx="643" cy="342" r="11" fill="#888"/>
                <path fill="#fbfbfb" stroke="#ea3a3e" stroke-width="10" d="M485 284L503 295 506 320 485 380 472 385 466 402 417 395 435 350 460 310Z"/>
                <g class="mlabel mini"><text x="750" y="303" font-size="76">Støvring</text><text x="60" y="403" font-size="61">ørup</text></g>
              </g>
              <text x="852" y="861" class="scale" font-size="20.500" textLength="80">1:10.000</text>
            </g>
          </svg>
          <div class="vscroll"><i class="sb u"></i><i class="thumb"></i><i class="sb d"></i></div>
        </div>
        <div class="hscroll"><i class="sb l"></i><i class="sb r"></i></div>
        <div class="navbar">
          <svg class="ar" viewBox="0 0 13 11"><path d="M6 1L2 5.500 6 10M12 1L8 5.500 12 10"/></svg>
          <svg class="ar s2" viewBox="0 0 13 11"><path d="M8 1L4 5.500 8 10"/></svg>
          <span class="n1">1</span><span class="n2">of</span><span class="n3">1</span>
          <svg class="ar s3" viewBox="0 0 13 11"><path d="M4 1l4 4.500L4 10"/></svg>
          <svg class="ar s4" viewBox="0 0 13 11"><path d="M1 1l4 4.500L1 10M7 1l4 4.500L7 10"/></svg>
          <svg class="pl" viewBox="0 0 14 14"><path fill="#7bcf9b" stroke="#333" stroke-width="1.200" d="M5.500.6h3v5h5v3h-5v5h-3v-5h-5v-3h5z"/></svg>
          <svg class="dl" viewBox="0 0 12 12"><path stroke="#b09a96" stroke-width="2.800" d="M1 0l10 12M11 0L1 12"/><path stroke="#ef9c92" stroke-width="1.800" d="M1 0l10 12M11 0L1 12"/></svg>
          <span class="pct">100%</span>
          <i class="minus"></i>
          <svg class="slider" width="92" height="26"><path fill="#e3e6e6" stroke="#ccd2d2" d="M1.500 10.500h89v3h-89z"/><path stroke="#d0d0d0" d="M1.500 24v2M46.500 24v2M90.500 24v2"/><path fill="#fff" stroke="#999" d="M41.500 4.500h10v11l-5 6-5-6z"/></svg>
          <svg class="plus" width="14" height="14"><path fill="#5c5c5c" d="M5 1h4v4h4v4H9v4H5V9H1V5h4z"/></svg>
          <svg class="fit" width="13" height="13"><path fill="#5a5a5a" d="M5 0h3L6.500 5zM5 13h3L6.500 8zM0 5v3l5-1.500zM13 5v3L8 6.500z"/></svg>
        </div>
      </div>
      <section class="message">
        <div class="phead"><span>Message</span><svg width="12" height="6"><path fill="#fff" d="M0 0h12L6 6z"/></svg><svg width="10" height="10"><use href="#i-x"/></svg></div>
        <div class="mbody">
          <div class="mtext">
            <p>10:08:15: Exporting Layout Window with PDF driver MapInfo PDF Printer Version 2100 x64.</p>
            <p>10:08:16: PrintWin Window 3048 File "C:\Data\318.pdf" overwrite</p>
            <p>10:08:24: Completed printing maps for site 318</p>
            <p>10:08:24: Set Map Window 3009 Layer 1 Display Global</p>
            <p>10:08:24: Set Map Window 3011 Layer 1 Display Global</p>
            <p>10:08:24: Finished Exporting all maps</p>
          </div>
          <div class="mscroll"><svg width="8" height="7"><use href="#i-up"/></svg><i></i><svg class="dn" width="8" height="7"><use href="#i-up"/></svg></div>
        </div>
      </section>
    </section>

    <aside class="rail"><svg width="15" height="15" viewBox="0 0 15 15"><path fill="#fff" stroke="#333" d="M.5 3.500h13v11H.5z"/><path stroke="#333" d="M0 5.500h9"/><path fill="#cfeaf1" stroke="#333" d="M2.500 8.500h2v4h-2zM7.500 8.500v3h3v-3"/><path fill="none" stroke="#333" stroke-width="1.500" d="M9 1h3M14 3q-2 3-4 1M11.500 5v9"/></svg><span>Tools</span></aside>
  </main>

  <footer class="status"><span>*Planning Zones Layout.WOR</span><i></i><svg width="14" height="15"><path fill="#acacac" d="M7 0q5 0 5 6 0 4 2 5H0q2-1 2-5 0-6 5-6zM5 12h4q-2 4-4 0z"/></svg></footer>
</div>
</body>
</html>
```
FILE: styles.css
```css
* { box-sizing: border-box; }
body { margin: 0; width: 1920px; height: 1080px; overflow: hidden; background: #fff; font: 12px/16px "Open Sans", "Noto Sans", sans-serif; letter-spacing: -.3px; color: #222; }
svg { display: block; flex: none; overflow: visible; }
symbol, .canvas { overflow: hidden; }
i { font-style: normal; }
.defs { position: absolute; }
.window { display: flex; flex-direction: column; width: 1920px; height: 1080px; border: 1px solid #2b579a; background: #fff; }

.titlebar { display: flex; align-items: center; height: 35px; background: #4c8bff; }
.quick { display: flex; gap: 16px; width: 894px; padding-left: 22px; }
.quick svg { width: 14px; height: 14px; }
.quick > svg { flex: none; }
.quick > svg > svg { width: 19px; height: 19px; }
.quick .more { width: 6px; height: 7px; margin: 3px 0 0 5px; }
.faded { opacity: .35; }
.blue { color: #4a9cf0; }
.gold { color: #f0d56f; }
.apptitle { width: 662px; padding-top: 3px; color: #fff; font-size: 13.4px; letter-spacing: 0; }
.qsearch { display: flex; align-items: center; justify-content: space-between; width: 200px; height: 20px; margin-top: 3px; padding: 0 7px 0 3px; border: 2px solid #a9a9ac; background: #f5f5f5; color: #7b7b7b; letter-spacing: -.2px; }
.winbtns { display: flex; gap: 30px; margin: 3px 0 0 59px; }
.winbtns svg:last-child { margin-left: -1px; }

.ribbon { height: 125px; border-bottom: 1px solid #d0d0d0; background: #f5f5f5; }
.rtabs { display: flex; gap: 31px; height: 23px; padding: 4px 0 0 19px; font-size: 12.8px; color: #35106b; }
.rtabs .pro { margin-right: 3px; color: #8026d9; }
.rtabs .on { height: 19px; border-bottom: 3px solid #4c8bff; font-size: 12.3px; font-weight: 600; }
.groups { display: flex; height: 98px; padding-top: 7px; }
.group { display: flex; flex-direction: column; justify-content: space-between; height: 92px; border-right: 1px solid #dcdcdc; }
.btns { display: flex; height: 68px; padding: 6px 0 0 3px; }
.btns.lift { padding-top: 5px; }
.btn { display: flex; flex-direction: column; align-items: center; line-height: 13px; text-align: center; color: #333; white-space: nowrap; }
.btn > svg { width: 28px; height: 28px; margin-bottom: 8px; flex: none; }
.btns.lift .btn > svg { margin-bottom: 7px; }
.btn > svg.wide { width: 30px; height: 30px; margin: -1px 0 7px; }
.off { opacity: .4; }
.dd { width: 0; height: 0; margin-top: 4px; border: 3px solid transparent; border-top-color: #666; border-bottom: 0; }
.dd.in { display: inline-block; vertical-align: 3px; margin: 0; }
.gname { height: 17px; text-align: center; color: #666; }
.g-file { width: 243px; } .g-file .btns { padding-left: 5px; }
.g-clip { width: 105px; } .g-clip .btns { padding-left: 4px; }
.g-win { width: 146px; } .g-win .btns { padding-left: 7px; }
.g-rec { width: 63px; } .g-rec .btns { padding-left: 1px; }
.g-out { width: 219px; } .g-out .btns { padding-left: 5px; }
.g-tools { width: 140px; }
.small { display: flex; flex-direction: column; gap: 6px; margin: -2px 0 0 2px; }
.small div { display: flex; align-items: center; gap: 4px; height: 16px; }
.small svg { width: 14px; height: 14px; }
.collapse { margin: 80px 0 0 983px; color: #666; }

.main { display: flex; height: 896px; padding: 2px; background: #fff; }
.left { display: flex; flex-direction: column; gap: 6px; width: 392px; margin-right: 5px; margin-left: -1px; padding-left: 1px; box-sizing: content-box; }
.phead { display: flex; align-items: center; gap: 11px; height: 22px; padding: 0 5px 0 6px; background: #c9c6cf; color: #222; }
.phead span { flex: 1; }
.phead svg { color: #fff; }
.explorer { height: 686px; }
.explorer .phead { height: 23px; border: 1px solid #d4d4d4; border-bottom: 0; }
.ebody { height: 636px; border: 1px solid #d4d4d4; border-bottom: 1px solid #ccc; border-top-color: #fff; background: #f5f5f5; }
.etools { display: flex; align-items: center; height: 29px; padding-left: 4px; }
.etools > svg { width: 11px; height: 11px; margin: -1px 9px 0 0; }
.etools > svg:nth-child(2) { margin-right: 12px; }
.etools .sbox { width: 301px; margin-left: -2px; }
.sbox { display: flex; align-items: center; justify-content: space-between; height: 20px; padding: 0 2px; border: 1px solid #ccc; background: #f5f5f5; color: #555; }
.sec { display: flex; align-items: center; gap: 10px; height: 18px; padding-left: 5px; color: #111; }
.sec svg, .th svg { color: #333; }
.tree { height: 272px; overflow: hidden; color: #1a1a1a; }
.root, .lay { display: flex; align-items: center; height: 26px; }
.tree span { white-space: nowrap; }
.tight { letter-spacing: -.38px; }
.root { padding-left: 5px; }
.root > span { flex: 1; margin-left: 7px; }
.tri { width: 0; height: 0; border: 3.500px solid transparent; border-right-color: #333; border-bottom-color: #333; margin-right: 10px; }
.mi { width: 12px; height: 12px; }
.tg { width: 14px; height: 14px; margin-right: 39px; }
.dim { opacity: .45; }
.lay { padding-left: 41px; }
.cb { display: block; width: 14px; height: 14px; margin-top: 2px; border: 1px solid #555; background: #fff; flex: none; }
.cb path { fill: none; stroke: #222; stroke-width: 1.800; }
.cb.gray { border-color: #bbb; background: #e6e6e6; }
.cb.gray path { stroke: #777; }
.sw { width: 30px; height: 20px; margin: 0 7px 0 5px; }
.sw:has(use) { height: 16px; margin-top: -2px; }
.lay > span:not(.sw) { flex: 1; }
.lay .pn { width: 14px; height: 14px; margin: -5px 6px 0 0; }
.lay .sl { width: 15px; height: 14px; margin: -5px 63px 0 0; color: #f2d16b; }
.lay .sl:not(:last-child) { margin-right: 10px; }
.lay .tg { margin-top: -5px; }
.lay .no { color: #bbb; opacity: .5; }
.hid > span { color: #808080; }
hr { width: 321px; height: 2px; margin: 30px 0 4px 26px; border: 0; background: #eee; }
hr.last { margin: 8px 0 0 26px; }
.grouped, .sorting { display: flex; align-items: center; gap: 8px; height: 22px; padding-left: 6px; color: #73869a; }
.bluetri { width: 0; height: 0; border: 5px solid transparent; border-top: 5px solid #2d6d96; border-bottom: 0; }
.th { display: flex; align-items: center; gap: 7px; height: 20px; padding: 1px 0 0 17px; font-weight: 600; font-size: 12px; color: #000; }
.grouped + .th { height: 22px; }
.th.tile { height: 21px; }
.th svg { width: 8px; }
.tr { display: flex; align-items: center; gap: 5px; height: 18px; padding-left: 30px; color: #222; }
.tr svg { width: 16px; height: 12px; }
.ptabs { display: flex; height: 28px; margin-top: 0; border-bottom: 2px solid #ccc; background: #e1e1e1; }
.ptabs div { display: flex; align-items: center; gap: 5px; padding-left: 9px; color: #222; }
.ptabs svg { width: 14px; height: 14px; }
.ptabs .on { width: 79px; background: #fff; color: #000; }
.ptabs .mv { width: 79px; }
.tasks { display: flex; flex-direction: column; height: 200px; border: 1px solid #ddd; background: #f5f5f5; }
.tasks .phead { height: 23px; padding-top: 1px; }
.tasks .sbox { margin: 3px 3px 0; }
.tasks .sorting { height: 19px; padding: 4px 0 0 2px; letter-spacing: -.08px; }
.tlist { flex: 1; border: 1px solid #a9a9b2; }

.center { display: flex; flex-direction: column; width: 1496px; }
.dtabs { display: flex; height: 29px; padding: 2px 0 0 3px; border-bottom: 1px solid #c8c8c8; background: #e1e1e1; }
.dtab { display: flex; align-items: center; height: 25px; width: 89px; padding-left: 4px; }
.dtab.first { border: 1px solid #f5f5f5; border-left: 1px solid #fff; width: 89px; padding-left: 3px; }
.dtab .ic { width: 14px; height: 14px; margin: -3px 7px 0 0; }
.dtab span { flex: 1; padding-top: 1px; letter-spacing: -.1px; }
.dtab .cx { width: 8px; height: 8px; margin: -1px 9px 0 0; color: #777; }
.dtab.on { width: 88px; background: #4c8bff; color: #fff; font-weight: 600; }
.dtab.on .cx { color: #fff; }
.dia { width: 7px; height: 7px; margin: 0 12px 0 6px; background: #ffc20e; transform: rotate(45deg); }
.dtab.lay4 { width: 107px; }
.tabdd { margin: 10px 6px 0 auto; width: 0; height: 0; border: 4px solid transparent; border-top: 6px solid #777; border-bottom: 0; }
.doc { height: 754px; margin-right: 1px; padding: 1px 1px 0 5px; border: 1px solid #c4d5e6; outline: 1px dashed #556; outline-offset: -2px; background: #f0f0f0; }
.docrow { display: flex; height: 705px; margin-left: 1px; }
.vscroll { display: flex; flex-direction: column; align-items: center; width: 17px; padding: 1px; background: #c8c8c8; }
.sb { display: grid; place-items: center; width: 15px; height: 15px; border: 1px solid #aaa; background: #fff; flex: none; }
.sb::after { content: ""; border: 4px solid transparent; border-bottom-color: #666; border-top: 0; }
.sb.d::after { border: 4px solid transparent; border-top-color: #666; border-bottom: 0; }
.sb.l::after { border: 4px solid transparent; border-right-color: #aaa; border-left: 0; }
.sb.r::after { border: 4px solid transparent; border-left-color: #aaa; border-right: 0; }
.thumb { width: 15px; height: 423px; margin: auto 0 1px; border: 1px solid #aaa; background: #fff; }
.hscroll { display: flex; justify-content: space-between; height: 19px; margin: 0 17px 0 1px; padding: 1px 0; border-top: 1px solid #c0c0c0; border-bottom: 1px solid #d0d0d0; background: #d9d9d9; }
.hscroll .sb { width: 17px; height: 16px; background: #f0f0f0; border-color: #ccc; }
.navbar { display: flex; align-items: center; height: 26px; }
.navbar .ar { width: 13px; height: 11px; fill: none; stroke: #8fb4da; stroke-width: 2.500; }
.navbar .s2 { margin-left: 10px; }
.n1 { margin-left: 10px; width: 20px; } .n2 { width: 20px; } .n3 { width: 19px; }
.s3 { margin: 0 10px 0 0; }
.pl { width: 14px; height: 14px; margin-left: 11px; }
.dl { width: 12px; height: 12px; margin-left: 18px; }
.pct { margin-left: auto; }
.minus { width: 13px; height: 4px; margin: 0 14px 0 17px; background: #5c5c5c; }
.plus { margin: 0 12px 0 17px; }
.fit { margin-right: 10px; }
.message { display: flex; flex-direction: column; height: 103px; margin: 6px 1px 0 0; border: 1px solid #ddd; }
.message .phead { height: 21px; padding-right: 4px; }
.mbody { display: flex; flex: 1; background: #fff; }
.mtext { flex: 1; padding: 1px 0 0 1px; font: 11px/13px "DejaVu Sans Condensed", "DejaVu Sans", sans-serif; letter-spacing: -.14px; color: #000; }
.mtext p { margin: 0; }
.mscroll { display: flex; flex-direction: column; align-items: center; width: 15px; padding: 6px 0 5px; margin-right: 1px; background: #f0f0f0; color: #555; }
.mscroll i { width: 15px; height: 17px; margin: auto 0 5px; background: #cdcdcd; }
.dn { transform: rotate(180deg); }
.rail { display: flex; flex-direction: column; align-items: center; width: 21px; padding: 8px 0 0 2px; background: #efefef; }
.rail span { margin: 2px 2px 0 0; writing-mode: vertical-rl; line-height: 14px; }
.status { display: flex; align-items: center; justify-content: flex-end; height: 22px; padding-right: 6px; border-top: 1px solid #5b8fc9; background: #f5f5f5; color: #444; }
.status span { padding-bottom: 1px; }
.status i { width: 0; height: 0; margin: -2px 21px 0 8px; border: 5.500px solid transparent; border-top: 0; border-bottom: 6px solid #444; }
.status svg { margin-top: -4px; }

/* map drawing */
.lake { fill: #bfe8ff; stroke: #a3d5ee; stroke-width: 2; }
.wood { fill: #93d1a0; }
.town { fill: #fad6b0; }
.bld { fill: #fdab83; }
.casing { fill: none; stroke: #f6cdb6; stroke-width: 15; }
.road { fill: none; stroke: #fff; stroke-width: 9; }
.road2 { fill: none; stroke: #fff; stroke-width: 8; }
.rgap { fill: none; stroke: #fad6b0; stroke-width: 20; }
.ycase { fill: none; stroke: #f8d8a2; stroke-width: 22; }
.yroad { fill: none; }
#yw, #by { stroke-width: 18; stroke: #fdef96; }
.mlabel { font-family: "DejaVu Sans", sans-serif; letter-spacing: 0; fill: #4a4a4a; }
.mini { fill: #555; stroke: #555; stroke-width: 1.500; }
.city { fill: #3c3c3c; }
.lato { font-family: Lato, sans-serif; letter-spacing: 0; fill: #111; }
.halo { paint-order: stroke; stroke: #fff; stroke-width: 2.500px; }
.scale { font-family: "Liberation Sans", sans-serif; font-weight: bold; letter-spacing: 0; fill: #000; }
```
